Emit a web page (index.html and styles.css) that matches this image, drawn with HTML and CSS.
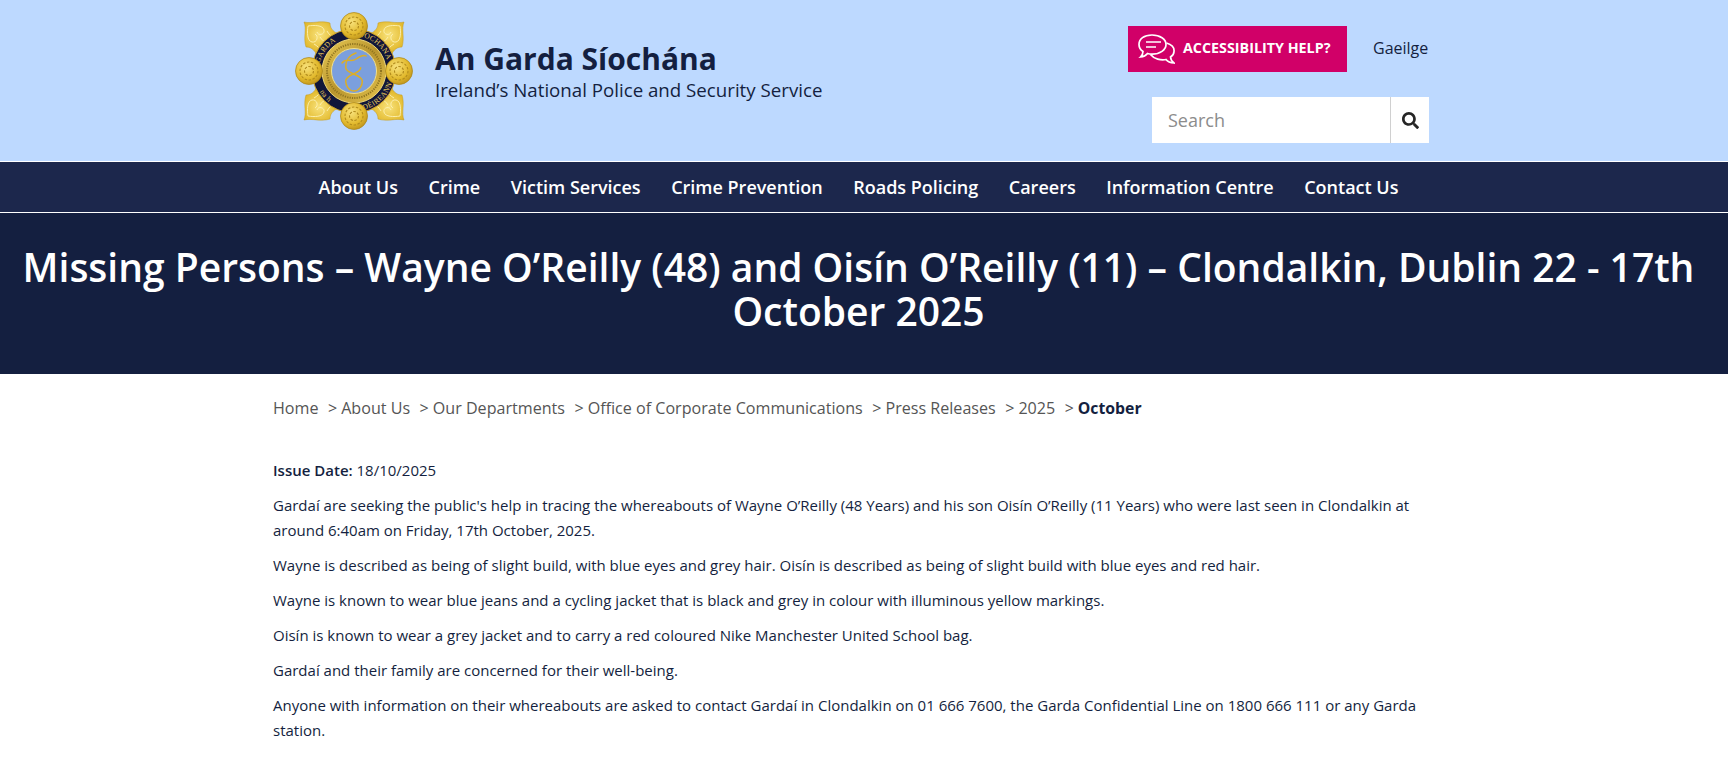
FILE: index.html
```html
<!DOCTYPE html>
<html lang="en">
<head>
<meta charset="utf-8">
<title>Missing Persons</title>
<link rel="stylesheet" href="styles.css">
</head>
<body>
<header class="top">
  <div class="top-inner">
    <a class="brand" href="#">
      <svg class="crest" viewBox="0 0 120 120" aria-hidden="true">
        <defs>
          <radialGradient id="gold" cx="40%" cy="35%" r="75%">
            <stop offset="0" stop-color="#f8e27c"/><stop offset=".6" stop-color="#e2b92c"/><stop offset="1" stop-color="#b58a18"/>
          </radialGradient>
          <linearGradient id="ringGold" x1="0" y1="0" x2="1" y2="1">
            <stop offset="0" stop-color="#e9cb55"/><stop offset=".5" stop-color="#b9952e"/><stop offset="1" stop-color="#e6c64e"/>
          </linearGradient>
          <path id="arcTop" d="M25 60a35 35 0 0 1 70 0"/>
          <path id="arcBot" d="M20 60a40 40 0 0 0 80 0"/>
          <g id="corner">
            <path class="corner-fill" d="M10 11C18 13 27 9 36 12 36 18 40 22 48 24L24 48C22 40 18 36 12 36 9 27 13 18 10 11Z"/>
            <path class="corner-line" d="M14 15C20 14 29 14 30 19 31 24 24 25 23 21M14 15C13 21 13 30 18 31 23 32 25 25 21 23M26 26C28 29 30 31 33 32M33 20C35 24 38 26 42 27M20 33C24 35 26 38 27 42"/>
          </g>
        </defs>
        <use href="#corner"/>
        <use href="#corner" transform="matrix(-1 0 0 1 120 0)"/>
        <use href="#corner" transform="matrix(1 0 0 -1 0 120)"/>
        <use href="#corner" transform="matrix(-1 0 0 -1 120 120)"/>
        <circle cx="60" cy="60" r="42" fill="#11163a" stroke="#caa02a" stroke-width="1"/>
        <text class="crest-text"><textPath href="#arcTop" startOffset="20%" text-anchor="middle">GARDA</textPath></text>
        <text class="crest-text"><textPath href="#arcTop" startOffset="71%" text-anchor="middle">SÍOCHÁNA</textPath></text>
        <text class="crest-text"><textPath href="#arcBot" startOffset="23%" text-anchor="middle">na h</textPath></text>
        <text class="crest-text"><textPath href="#arcBot" startOffset="74%" text-anchor="middle">DÉIREANN</textPath></text>
        <circle cx="60" cy="60" r="32" fill="url(#ringGold)" stroke="#f0d877" stroke-width="1"/>
        <circle cx="60" cy="60" r="27" fill="none" stroke="#8f7420" stroke-width="2" stroke-dasharray="1.2 1.2"/>
        <circle cx="60" cy="60" r="22.500" fill="#7b9fdd" stroke="#f2e08c" stroke-width="1"/>
        <g fill="none" stroke="#dcae26" stroke-width="1.500" stroke-linecap="round">
          <path d="M48 52C52 46 57 52 62 48 65 46 69 43 72 45"/>
          <path d="M62 42C55 44 51.500 50 51.700 56.700 52 63 68 63 68.300 70 68.500 75 65 80 60 80 55 80 51.700 75 51.700 70 51.700 63 66.700 63 66.700 56.700"/>
        </g>
        <g fill="url(#gold)" stroke="#a98416" stroke-width=".7">
          <circle cx="60" cy="15" r="13.500"/><circle cx="60" cy="105" r="13.500"/><circle cx="15" cy="60" r="13.500"/><circle cx="105" cy="60" r="13.500"/>
        </g>
        <g fill="none" stroke="#b08a1c" stroke-width="1.100" stroke-dasharray="2.500 1.500">
          <circle cx="60" cy="15" r="9"/><circle cx="60" cy="105" r="9"/><circle cx="15" cy="60" r="9"/><circle cx="105" cy="60" r="9"/>
          <circle cx="60" cy="15" r="4.500"/><circle cx="60" cy="105" r="4.500"/><circle cx="15" cy="60" r="4.500"/><circle cx="105" cy="60" r="4.500"/>
        </g>
      </svg>
      <span class="brand-text">
        <span class="brand-name">An Garda Síochána</span>
        <span class="brand-sub">Ireland’s National Police and Security Service</span>
      </span>
    </a>
    <div class="tools">
      <div class="tools-row">
        <a class="help" href="#">
          <svg class="help-icon" viewBox="0 0 37 30" aria-hidden="true">
            <path d="M14 1C6 1 1 5 1 10.500 1 13.500 2.700 16 5 17.500 5 19.500 4 21.500 2.500 23 5.500 22.800 8 21.500 9.500 19.500 11 20 12.500 20.200 14 20.200 22 20.200 28 15.800 28 10.500 28 5 22 1 14 1Z" fill="none" stroke="#fff" stroke-width="1.700"/>
            <path d="M8 8H23M8 13H18" stroke="#fff" stroke-width="1.700" fill="none"/>
            <path d="M28.500 9C33.500 10.500 36.500 13.500 36 17.500 36 20 34.500 21.800 32.500 23 32.700 25 33.800 27.500 36 29 32.500 28.800 29.500 27.500 28 25.500 23 26.500 16 25 12.500 20.500" fill="none" stroke="#fff" stroke-width="1.700"/>
          </svg>
          <span>ACCESSIBILITY HELP?</span>
        </a>
        <a class="lang" href="#">Gaeilge</a>
      </div>
      <form class="search">
        <input class="search-input" type="text" placeholder="Search">
        <button class="search-btn" type="button" aria-label="Search">
          <svg viewBox="0 0 512 512" class="search-icon" aria-hidden="true"><path d="M505 442.700 405.300 343c-4.500-4.500-10.600-7-17-7H372c27.600-35.300 44-79.700 44-128C416 93.100 322.900 0 208 0S0 93.100 0 208s93.100 208 208 208c48.300 0 92.700-16.400 128-44v16.300c0 6.400 2.500 12.500 7 17l99.700 99.700c9.400 9.400 24.600 9.400 33.900 0l28.300-28.300c9.400-9.400 9.400-24.600.1-34zM208 336c-70.700 0-128-57.200-128-128 0-70.700 57.200-128 128-128 70.700 0 128 57.200 128 128 0 70.700-57.200 128-128 128z"/></svg>
        </button>
      </form>
    </div>
  </div>
</header>
<nav class="nav">
  <a href="#">About Us</a><a href="#">Crime</a><a href="#">Victim Services</a><a href="#">Crime Prevention</a><a href="#">Roads Policing</a><a href="#">Careers</a><a href="#">Information Centre</a><a href="#">Contact Us</a>
</nav>
<section class="hero">
  <h1>Missing Persons – Wayne O’Reilly (48) and Oisín O’Reilly (11) – Clondalkin, Dublin 22 - 17th October 2025</h1>
</section>
<main class="content">
  <ol class="crumbs">
    <li><a href="#">Home</a></li>
    <li><a href="#">About Us</a></li>
    <li><a href="#">Our Departments</a></li>
    <li><a href="#">Office of Corporate Communications</a></li>
    <li><a href="#">Press Releases</a></li>
    <li><a href="#">2025</a></li>
    <li class="current">October</li>
  </ol>
  <article class="article">
    <p><strong>Issue Date:</strong> 18/10/2025</p>
    <p>Gardaí are seeking the public's help in tracing the whereabouts of Wayne O’Reilly (48 Years) and his son Oisín O’Reilly (11 Years) who were last seen in Clondalkin at around 6:40am on Friday, 17th October, 2025.</p>
    <p>Wayne is described as being of slight build, with blue eyes and grey hair. Oisín is described as being of slight build with blue eyes and red hair.</p>
    <p>Wayne is known to wear blue jeans and a cycling jacket that is black and grey in colour with illuminous yellow markings.</p>
    <p>Oisín is known to wear a grey jacket and to carry a red coloured Nike Manchester United School bag.</p>
    <p>Gardaí and their family are concerned for their well-being.</p>
    <p>Anyone with information on their whereabouts are asked to contact Gardaí in Clondalkin on 01 666 7600, the Garda Confidential Line on 1800 666 111 or any Garda station.</p>
  </article>
</main>
</body>
</html>
```

FILE: styles.css
```css
* { box-sizing: border-box; }
html, body { margin: 0; padding: 0; }
body { font-family: "Open Sans", sans-serif; color: #141f40; background: #fff; height: 759px; overflow: hidden; }
a { color: inherit; text-decoration: none; }

.top { background: #bdd9ff; height: 161px; }
.top-inner { width: 1156px; margin: 0 0 0 273px; display: flex; justify-content: space-between; height: 161px; }
.brand { display: flex; align-items: flex-start; margin-left: 21px; padding-top: 11px; }
.crest { width: 120px; height: 120px; flex: none; }
.corner-fill { fill: url(#gold); stroke: #c29a22; stroke-width: .5; }
.corner-line { fill: none; stroke: #fdf2b4; stroke-width: .9; }
.crest-text { font-family: "Liberation Serif", serif; font-size: 7.500px; fill: #e8c95a; letter-spacing: .3px; }
.brand-text { display: flex; flex-direction: column; margin-left: 21px; padding-top: 29px; }
.brand-name { font-size: 30px; font-weight: 700; line-height: 37px; }
.brand-sub { font-size: 18.700px; font-weight: 500; line-height: 25px; }

.tools { display: flex; flex-direction: column; align-items: flex-end; padding-top: 26px; }
.tools-row { display: flex; align-items: center; height: 46px; }
.help { display: flex; align-items: center; width: 219px; height: 46px; background: #d10068; color: #fff; font-size: 14.300px; font-weight: 700; padding: 0 0 3px 10px; }
.help-icon { width: 37px; height: 30px; margin: 3px 8px 0 0; flex: none; }
.lang { margin: 0 0 2px 26px; font-size: 16px; width: 56px; }
.search { display: flex; width: 277px; height: 46px; margin-top: 25px; background: #fff; }
.search-input { flex: 1; min-width: 0; border: 0; background: transparent; font: 18px "Open Sans", sans-serif; padding: 0 16px; outline: 0; color: #333; }
.search-input::placeholder { color: #8c8c8c; opacity: 1; }
.search-btn { width: 39px; border: 0; border-left: 1px solid #d0d0d0; background: transparent; padding: 0; display: flex; align-items: center; justify-content: center; }
.search-icon { width: 17px; height: 17px; fill: #262626; }

.nav { height: 52px; background: #1c274c; border-top: 1px solid #fff; border-bottom: 1px solid #fff; display: flex; justify-content: center; align-items: center; gap: 30.500px; padding-right: 11px; color: #fff; font-size: 18px; font-weight: 600; }

.hero { height: 161px; background: #141f40; color: #fff; display: flex; align-items: center; justify-content: center; padding: 0 26px 9px 15px; }
.hero h1 { margin: 0; font-size: 39px; line-height: 44px; font-weight: 600; text-align: center; }

.content { width: 1156px; margin-left: 273px; }
.crumbs { list-style: none; margin: 0; padding: 23px 0 0; display: flex; font-size: 16.100px; line-height: 22px; color: #555; }
.crumbs li + li::before { content: ">"; margin: 0 4px 0 9.500px; font-weight: 400; color: #555; }
.crumbs .current { font-weight: 700; font-size: 15.800px; color: #141f40; }
.article { margin-top: 39px; font-size: 15px; line-height: 25px; }
.article strong { font-weight: 600; }
.article p { margin: 0 0 10px; }
```
